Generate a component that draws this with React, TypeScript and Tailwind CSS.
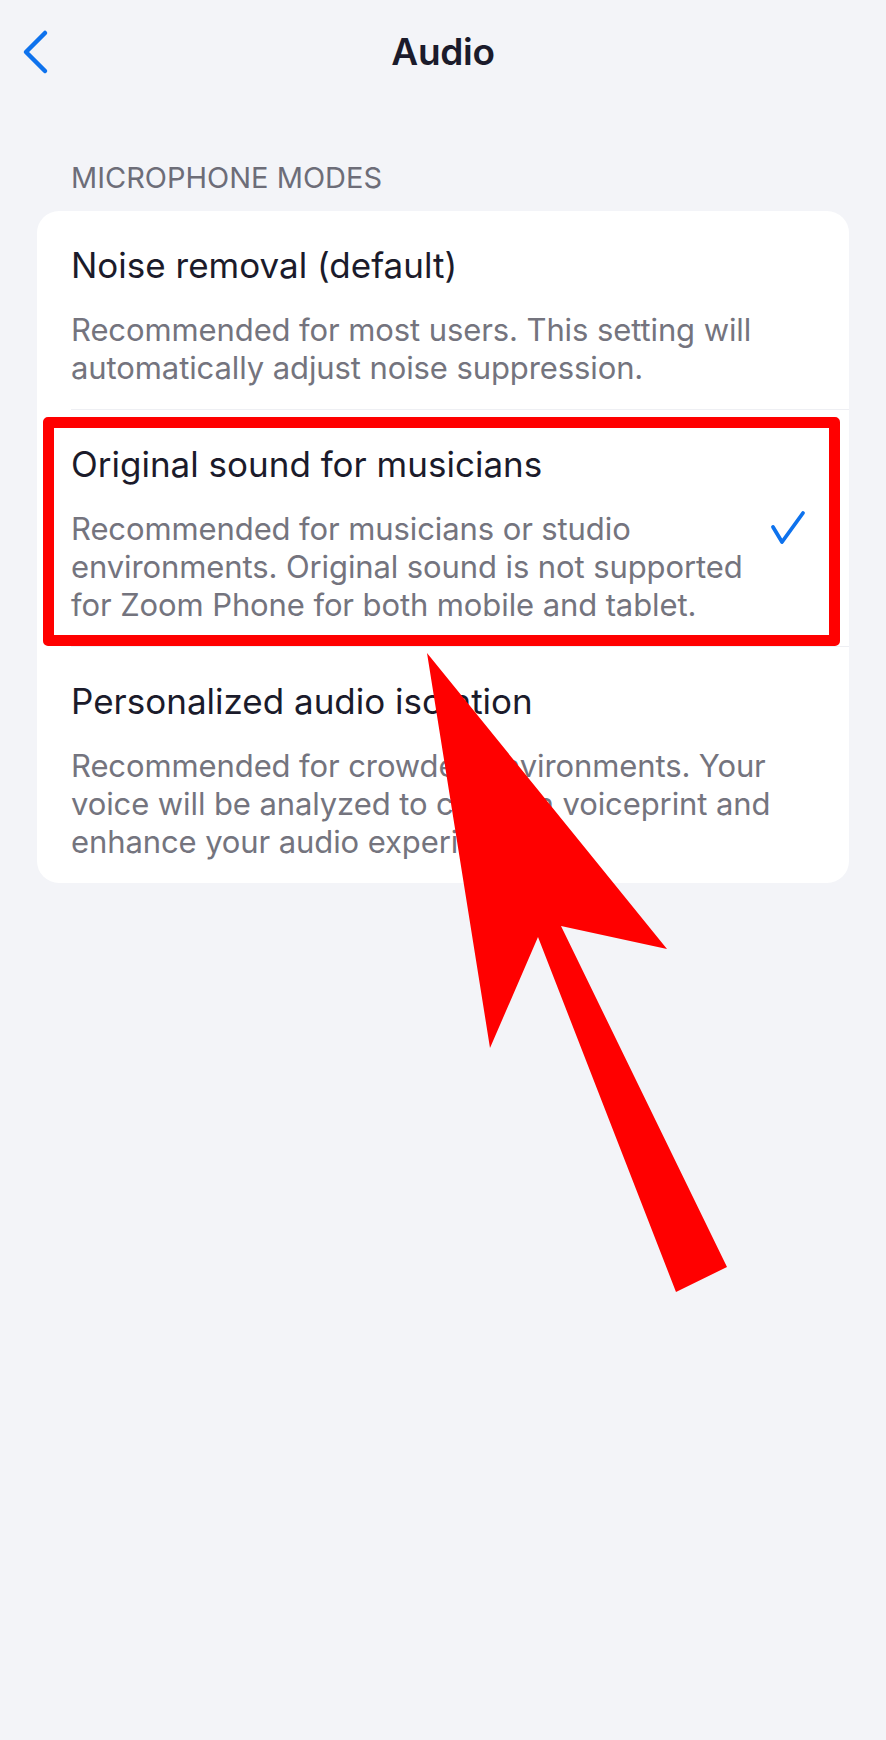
import React from "react";

const rows = [
  {
    title: "Noise removal (default)",
    lines: ["Recommended for most users. This setting will", "automatically adjust noise suppression."],
    checked: false,
  },
  {
    title: "Original sound for musicians",
    lines: [
      "Recommended for musicians or studio",
      "environments. Original sound is not supported",
      "for Zoom Phone for both mobile and tablet.",
    ],
    checked: true,
  },
  {
    title: "Personalized audio isolation",
    lines: [
      "Recommended for crowded environments. Your",
      "voice will be analyzed to create a voiceprint and",
      "enhance your audio experience.",
    ],
    checked: false,
  },
];

export default function App() {
  return (
    <div
      className="relative w-[886px] h-[1740px] bg-[#f3f4f8] overflow-hidden"
      style={{ fontFamily: "Inter, 'Noto Sans', 'Liberation Sans', sans-serif" }}
    >
      {/* Nav bar */}
      <div className="relative h-[104px] flex items-center justify-center">
        <button className="absolute left-[20px] top-[29px] w-[30px] h-[46px] flex items-center justify-center">
          <svg width="30" height="46" viewBox="0 0 30 46" fill="none">
            <path d="M25 4 L6 23 L25 42" stroke="#0e72ed" strokeWidth="4.5" strokeLinecap="round" strokeLinejoin="round" />
          </svg>
        </button>
        <h1 className="text-[37px] font-semibold text-[#1b1b2b] tracking-[-0.3px]">Audio</h1>
      </div>

      {/* Section header */}
      <div className="mt-[56px] px-[71px] h-[36px] flex items-center text-[29px] leading-[36px] text-[#6d6d78] uppercase">
        Microphone modes
      </div>

      {/* Card */}
      <div className="mx-[37px] mt-[15px] bg-white rounded-[22px] overflow-hidden">
        {rows.map((r, i) => (
          <div key={i}>
            {i > 0 && <div className="ml-[34px] h-px bg-[#eeeff3]" />}
            <div className="pl-[34px] pr-[36px] pt-[33px] pb-[22px] flex items-start">
              <div className="flex-1">
                <div className="text-[35px] leading-[42px] text-[#1b1b2b] whitespace-nowrap">{r.title}</div>
                <div className="mt-[25px] text-[31px] leading-[38px] text-[#74747e] tracking-[-0.1px]">
                  {r.lines.map((l, j) => (
                    <div key={j} className="whitespace-nowrap">
                      {l}
                    </div>
                  ))}
                </div>
              </div>
              {r.checked && (
                <svg width="38" height="36" viewBox="0 0 38 36" fill="none" className="mt-[67px] mr-[6px] shrink-0">
                  <path d="M4 17 L13 32 L34 3" stroke="#0e72ed" strokeWidth="3.8" strokeLinecap="round" strokeLinejoin="round" />
                </svg>
              )}
            </div>
          </div>
        ))}
      </div>

      {/* Red highlight box */}
      <div className="absolute left-[43px] top-[417px] w-[797px] h-[229px] border-[11px] border-[#ff0000] rounded-[5px] pointer-events-none" />

      {/* Red arrow */}
      <svg className="absolute left-0 top-0 pointer-events-none" width="886" height="1740" viewBox="0 0 886 1740">
        <polygon
          points="427,653 667,949 561,926 727,1267 676,1292 538,937 490,1048"
          fill="#ff0000"
        />
      </svg>
    </div>
  );
}
